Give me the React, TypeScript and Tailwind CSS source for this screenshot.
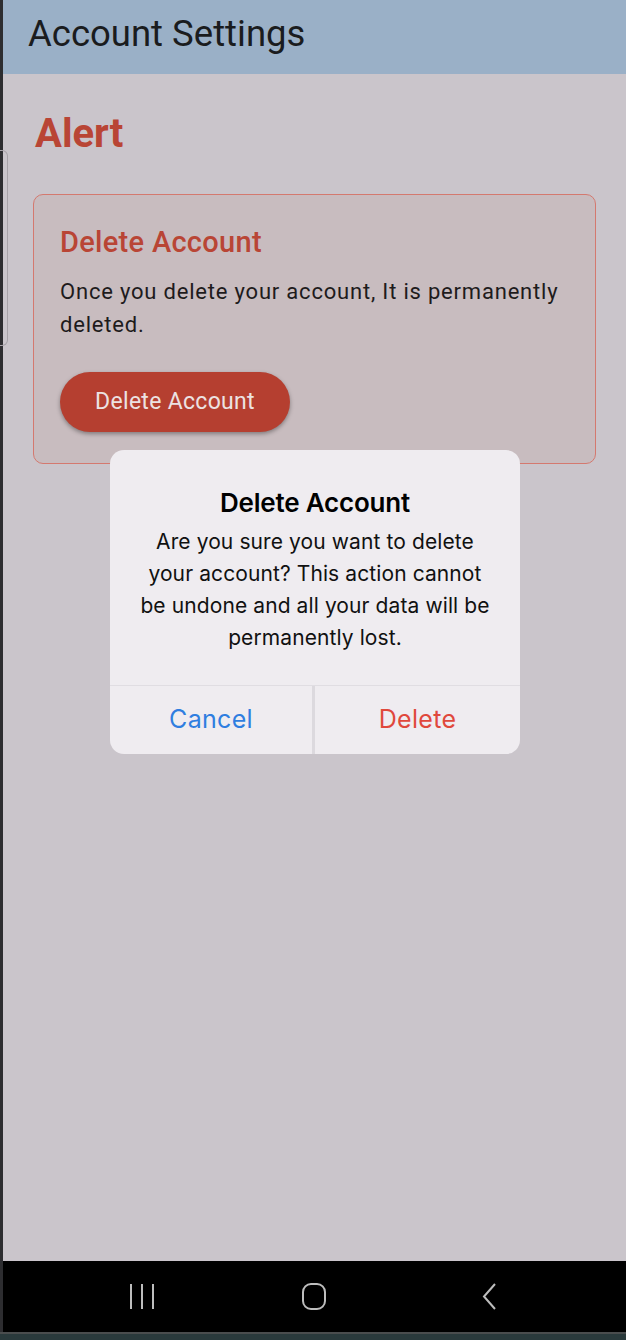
import React from 'react';

function NavBar() {
  return (
    <div className="grid h-[71px] grid-cols-3 items-center bg-black px-[53px]">
      <div className="flex justify-center">
        <svg width="26" height="27" viewBox="0 0 26 27">
          <path d="M2 1v25M13 1v25M24 1v25" stroke="#bdbdbd" strokeWidth="2" fill="none" />
        </svg>
      </div>
      <div className="flex justify-center">
        <svg width="26" height="27" viewBox="0 0 26 27">
          <rect x="2" y="1" width="22" height="25" rx="8" stroke="#bdbdbd" strokeWidth="2" fill="none" />
        </svg>
      </div>
      <div className="flex justify-center">
        <svg width="16" height="27" viewBox="0 0 16 27" className="ml-[6px]">
          <path d="M13 1L2 13.5 13 26" stroke="#bdbdbd" strokeWidth="2" fill="none" />
        </svg>
      </div>
    </div>
  );
}

function ConfirmDialog() {
  return (
    <div className="absolute left-[107px] top-[376px] w-[410px] overflow-hidden rounded-[14px] bg-[#efecf0] font-['Inter',sans-serif]">
      <div className="flex flex-col items-center px-[30px] pt-[37px] pb-[31px] text-center">
        <h3 className="text-[26px] leading-[32px] font-semibold tracking-[-0.2px] text-black">Delete Account</h3>
        <p className="mt-[7px] text-[21px] leading-[32px] tracking-[0.1px] text-[#111]">
          Are you sure you want to delete your account? This action cannot be undone and all your data will be
          permanently lost.
        </p>
      </div>
      <div className="grid grid-cols-2 border-t border-[#e0dde2]">
        <button className="h-[68px] border-r-[3px] border-[#dcd9de] text-[25px] tracking-[0.3px] text-[#2f7ee0]">
          Cancel
        </button>
        <button className="h-[68px] text-[25px] tracking-[0.3px] text-[#e0483c]">Delete</button>
      </div>
    </div>
  );
}

export default function App() {
  return (
    <div className="flex h-[1340px] w-[626px] flex-col bg-[#2d2d30] font-['Roboto',sans-serif]">
      <div className="ml-[3px] flex flex-1 flex-col">
        {/* App bar */}
        <header className="flex h-[74px] items-center bg-[#9ab0c7] px-[25px]">
          <h1 className="-mt-[6px] text-[36.5px] leading-none text-[#1a1c1e]">Account Settings</h1>
        </header>

        {/* Body */}
        <main className="relative flex-1 bg-[#cac5cb] px-[30px] pt-[37px]">
          <div className="absolute -left-[3px] top-[76px] h-[196px] w-[8px] rounded-r-[6px] border border-l-0 border-[#a7a2a8]" />

          <h2 className="ml-[2px] text-[40px] leading-[46px] font-bold text-[#b94535]">Alert</h2>

          <section className="mt-[37px] rounded-[10px] border border-[#d4796f] bg-[#c8bcbf] px-[26px] pt-[28px] pb-[31px]">
            <h3 className="text-[29px] leading-[38px] font-medium tracking-[0.3px] text-[#b94535]">Delete Account</h3>
            <p className="mt-[14px] text-[22px] leading-[33px] tracking-[0.8px] text-[#1e1b1c]">
              Once you delete your account, It is permanently deleted.
            </p>
            <button className="mt-[31px] h-[60px] w-[230px] rounded-full bg-[#b53f30] text-[23px] tracking-[0.3px] text-[#ece2e2] shadow-[0_2px_4px_rgba(0,0,0,0.35)]">
              Delete Account
            </button>
          </section>

          <ConfirmDialog />
        </main>

        <NavBar />
      </div>
      <div className="h-[8px] border-t-[2px] border-[#4a4d4e] bg-[#2a3a3c]" />
    </div>
  );
}
